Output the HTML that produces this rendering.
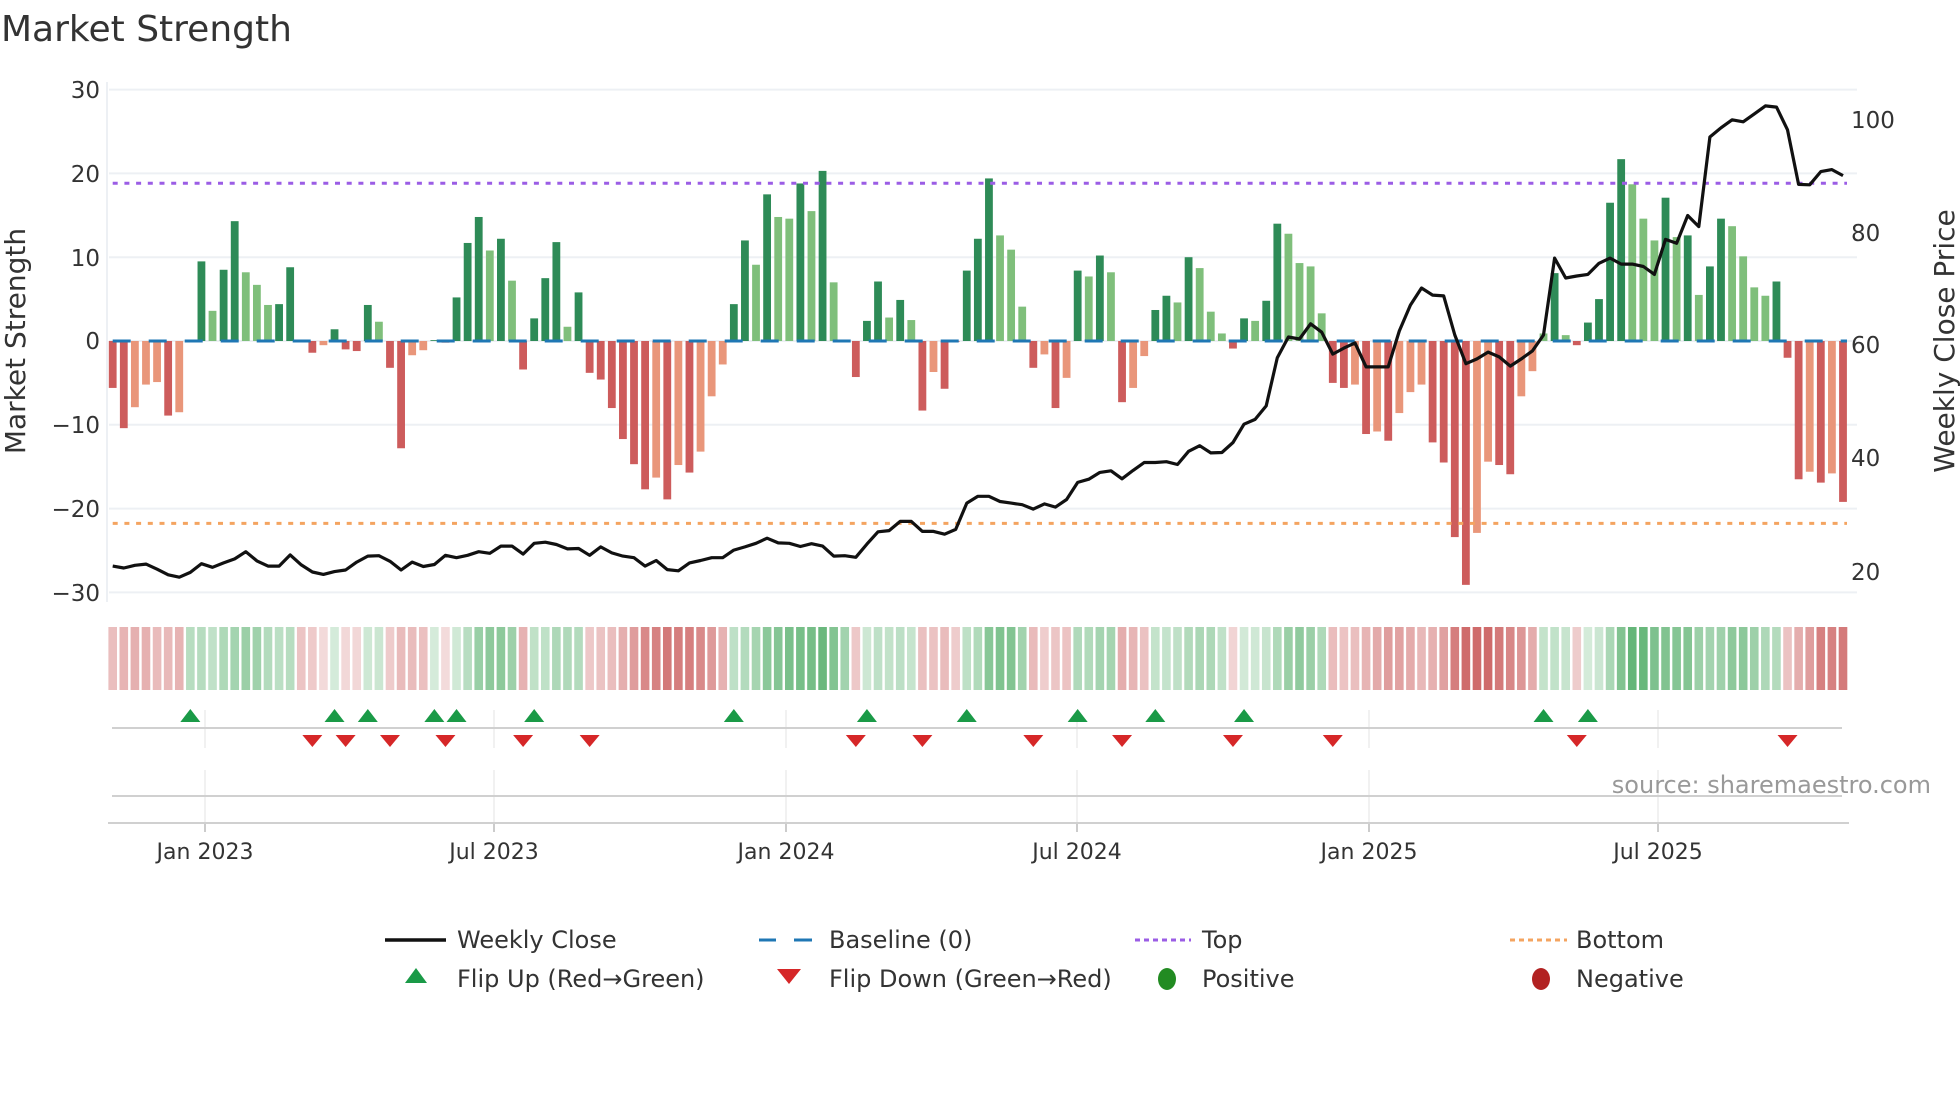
<!DOCTYPE html>
<html><head><meta charset="utf-8">
<style>
html,body{margin:0;padding:0;background:#fff;}
svg{display:block;font-family:"DejaVu Sans","Liberation Sans",sans-serif;}
</style></head>
<body>
<svg id="s" width="1960" height="1102" viewBox="0 0 1960 1102" xmlns="http://www.w3.org/2000/svg">
<rect width="1960" height="1102" fill="#fff"/>
<text x="1" y="41" font-size="36" fill="#333">Market Strength</text>
<g id="grid"></g>
<g id="strip"></g>
<g id="bars"></g>
<g id="lines"></g>
<g id="marks"></g>
<g font-size="23" fill="#333">
<text x="100" y="98" text-anchor="end">30</text>
<text x="100" y="182" text-anchor="end">20</text>
<text x="100" y="266" text-anchor="end">10</text>
<text x="100" y="349" text-anchor="end">0</text>
<text x="100" y="433" text-anchor="end">−10</text>
<text x="100" y="517" text-anchor="end">−20</text>
<text x="100" y="601" text-anchor="end">−30</text>
<text x="1851" y="128">100</text>
<text x="1851" y="241">80</text>
<text x="1851" y="353">60</text>
<text x="1851" y="466">40</text>
<text x="1851" y="580">20</text>
</g>
<text transform="translate(25,341) rotate(-90)" text-anchor="middle" font-size="28" fill="#333">Market Strength</text>
<text transform="translate(1954,341) rotate(-90)" text-anchor="middle" font-size="28" fill="#333">Weekly Close Price</text>
<g font-size="22" fill="#333" text-anchor="middle">
<text x="205" y="859">Jan 2023</text>
<text x="494" y="859">Jul 2023</text>
<text x="786" y="859">Jan 2024</text>
<text x="1077" y="859">Jul 2024</text>
<text x="1369" y="859">Jan 2025</text>
<text x="1658" y="859">Jul 2025</text>
</g>
<text x="1931" y="793" text-anchor="end" font-size="24" fill="#999">source: sharemaestro.com</text>
<g font-size="24" fill="#333">
<line x1="385" y1="940" x2="446" y2="940" stroke="#111" stroke-width="3.5"/>
<text x="457" y="948">Weekly Close</text>
<line x1="759" y1="940" x2="776" y2="940" stroke="#1f77b4" stroke-width="3"/>
<line x1="794" y1="940" x2="812" y2="940" stroke="#1f77b4" stroke-width="3"/>
<text x="829" y="948">Baseline (0)</text>
<line x1="1135" y1="940" x2="1191" y2="940" stroke="#9b5de5" stroke-width="3" stroke-dasharray="5,4"/>
<text x="1202" y="948">Top</text>
<line x1="1510" y1="940" x2="1567" y2="940" stroke="#f4a460" stroke-width="3" stroke-dasharray="5,4"/>
<text x="1576" y="948">Bottom</text>
<polygon points="405,983 427,983 416,968" fill="#1a9a47"/>
<text x="457" y="987">Flip Up (Red→Green)</text>
<polygon points="777,969 801,969 789,984" fill="#d62728"/>
<text x="829" y="987">Flip Down (Green→Red)</text>
<ellipse cx="1167" cy="979" rx="9" ry="11" fill="#228b22"/>
<text x="1202" y="987">Positive</text>
<ellipse cx="1541" cy="979" rx="9" ry="11" fill="#b22222"/>
<text x="1576" y="987">Negative</text>
</g>
</svg>
<script>
(function(){
var NS="http://www.w3.org/2000/svg";
function el(p,t,a){var e=document.createElementNS(NS,t);for(var k in a)e.setAttribute(k,a[k]);p.appendChild(e);return e;}
var V=[-5.6,-10.4,-7.9,-5.2,-4.9,-8.9,-8.5,0,9.5,3.6,8.5,14.3,8.2,6.7,4.3,4.4,8.8,0,-1.4,-0.5,1.4,-1,-1.2,4.3,2.3,-3.2,-12.8,-1.7,-1.1,0.1,-0.2,5.2,11.7,14.8,10.8,12.2,7.2,-3.4,2.7,7.5,11.8,
1.7,5.8,-3.8,-4.6,-8,-11.7,-14.7,-17.7,-16.3,-18.9,-14.8,-15.7,-13.2,-6.6,-2.8,4.4,12,9.1,17.5,14.8,14.6,18.8,15.5,20.3,7,0.1,-4.3,2.4,7.1,2.8,4.9,2.5,-8.3,-3.7,-5.7,-0.1,8.4,12.2,19.4,12.6,
10.9,4.1,-3.2,-1.6,-8,-4.4,8.4,7.7,10.2,8.2,-7.3,-5.6,-1.8,3.7,5.4,4.6,10,8.7,3.5,0.9,-0.9,2.7,2.4,4.8,14,12.8,9.3,8.9,3.3,-5,-5.6,-5.2,-11.1,-10.8,-11.9,-8.6,-6.1,-5.2,-12.1,
-14.5,-23.4,-29.1,-22.9,-14.4,-14.8,-15.9,-6.6,-3.6,0.9,8.1,0.7,-0.5,2.2,5,16.5,21.7,18.7,14.6,12,17.1,12.4,12.6,5.5,8.9,14.6,13.7,10.1,6.4,5.4,7.1,-2,-16.5,-15.6,-16.9,-15.8,-19.2];
var L={9:1,12:1,13:1,14:1,24:1,34:1,36:1,41:1,58:1,60:1,61:1,63:1,65:1,70:1,72:1,80:1,81:1,82:1,88:1,90:1,96:1,98:1,99:1,100:1,103:1,106:1,107:1,108:1,109:1,129:1,131:1,137:1,138:1,139:1,141:1,143:1,146:1,147:1,148:1,149:1,
2:1,3:1,4:1,6:1,19:1,27:1,28:1,49:1,51:1,53:1,54:1,55:1,74:1,84:1,86:1,92:1,93:1,112:1,114:1,116:1,117:1,118:1,123:1,124:1,127:1,128:1,153:1,155:1};
var Z=[1220,1225,1218,1215,1228,1242,1248,1236,1214,1223,1212,1202,1184,1207,1220,1220,1192,1217,1235,1241,1234,1230,1210,1195,1194,1208,1230,1210,1221,1216,1193,1199,1193,1184,1188,1170,1170,1190,1163,1160,1166,
1177,1176,1193,1172,1187,1195,1199,1220,1206,1229,1232,1212,1206,1199,1199,1180,1172,1163,1150,1162,1163,1171,1164,1170,1195,1194,1198,1165,1134,1131,1108,1108,1133,1133,1140,1128,1062,1045,1045,1058,
1062,1066,1077,1064,1072,1053,1010,1002,985,981,1001,980,960,960,958,965,932,918,936,935,910,864,852,818,697,645,650,612,633,688,673,660,720,720,720,630,565,522,540,
542,640,712,700,683,695,718,700,680,640,447,497,492,488,460,447,462,462,468,488,400,410,340,368,143,120,100,105,85,65,68,125,262,263,230,225,240];
var N=V.length, x0=112.7, dx=(1843-112.7)/(N-1);
function X(i){return x0+dx*i;}
var Y0=341, K=8.38;
var g=document.getElementById('grid');
[30,20,10,0,-10,-20,-30].forEach(function(v){var y=Y0-v*K;el(g,'line',{x1:109,x2:1857,y1:y,y2:y,stroke:'#edf0f4','stroke-width':2});});
el(g,'line',{x1:107,x2:107,y1:82,y2:602,stroke:'#edf0f4','stroke-width':2});
[205,494,786,1077,1369,1658].forEach(function(x){
 el(g,'line',{x1:x,x2:x,y1:710,y2:748,stroke:'#ececec','stroke-width':1.5});
 el(g,'line',{x1:x,x2:x,y1:770,y2:823,stroke:'#ececec','stroke-width':1.5});
 el(g,'line',{x1:x,x2:x,y1:823,y2:832,stroke:'#bbb','stroke-width':1.5});
});
el(g,'line',{x1:112,x2:1842,y1:728,y2:728,stroke:'#d0d0d0','stroke-width':2});
el(g,'line',{x1:112,x2:1842,y1:796,y2:796,stroke:'#d0d0d0','stroke-width':2});
el(g,'line',{x1:108,x2:1849,y1:823,y2:823,stroke:'#d0d0d0','stroke-width':2});
var st=document.getElementById('strip');
for(var i=0;i<N;i++){
 var v=V[i]; var sgn=v; if(Math.abs(v)<0.05){sgn=V[i+1]||V[i-1];}
 var m=(Math.abs(V[i])+Math.abs(V[Math.max(0,i-1)])+Math.abs(V[Math.max(0,i-2)]))/3;
 var a=0.18+0.62*Math.min(1,m/20);
 var c=sgn>0?[55,160,80]:[195,70,70];
 var r=Math.round(255-(255-c[0])*a),gg=Math.round(255-(255-c[1])*a),b=Math.round(255-(255-c[2])*a);
 el(st,'rect',{x:X(i)-4.3,y:627,width:8.6,height:63,fill:'rgb('+r+','+gg+','+b+')'});
}
var bg=document.getElementById('bars');
for(var i=0;i<N;i++){
 var v=V[i]; if(Math.abs(v)<0.05)continue;
 var col=v>0?(L[i]?'#7fbf7b':'#2e8b57'):(L[i]?'#e9967a':'#cd5c5c');
 var y=v>0?Y0-v*K:Y0; var h=Math.abs(v)*K;
 el(bg,'rect',{x:X(i)-3.9,y:y,width:7.8,height:h,fill:col});
}
var lg=document.getElementById('lines');
el(lg,'line',{x1:112.7,x2:1847,y1:Y0,y2:Y0,stroke:'#1f77b4','stroke-width':3,'stroke-dasharray':'18,18'});
el(lg,'line',{x1:112.7,x2:1847,y1:183.3,y2:183.3,stroke:'#9b5de5','stroke-width':3,'stroke-dasharray':'5,6.7'});
el(lg,'line',{x1:112.7,x2:1847,y1:523.4,y2:523.4,stroke:'#f4a460','stroke-width':3,'stroke-dasharray':'5,6.7'});
var pts=[];for(var i=0;i<N;i++){pts.push(X(i).toFixed(1)+','+(80+Z[i]/2.51).toFixed(1));}
el(lg,'polyline',{points:pts.join(' '),fill:'none',stroke:'#111','stroke-width':3.2,'stroke-linejoin':'round'});
var mg=document.getElementById('marks');
[7,20,23,29,31,38,56,68,77,87,94,102,129,133].forEach(function(i){var x=X(i);
 el(mg,'polygon',{points:(x-10)+',722 '+(x+10)+',722 '+x+',709',fill:'#1a9a47'});});
[18,21,25,30,37,43,67,73,83,91,101,110,132,151].forEach(function(i){var x=X(i);
 el(mg,'polygon',{points:(x-10)+',735 '+(x+10)+',735 '+x+',747',fill:'#d62728'});});
})();
</script>
</body></html>
